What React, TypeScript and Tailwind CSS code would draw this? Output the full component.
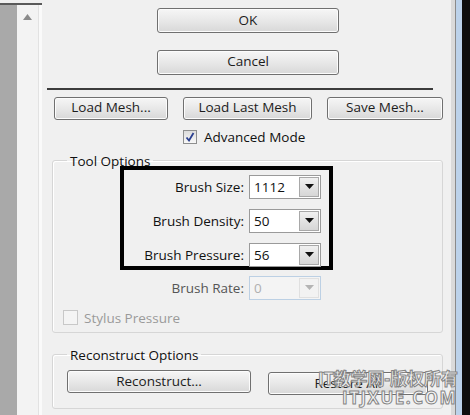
const font = "font-['Open_Sans','Noto_Sans','Noto_Sans_CJK_SC',sans-serif]";

function Button({ label, w, h = 23 }: { label: string; w: string; h?: number }) {
  return (
    <button
      type="button"
      className={`${w} ${h === 25 ? "h-[25px]" : "h-[23px]"} shrink-0 rounded-[3px] border border-[#707070] bg-gradient-to-b from-[#f6f6f6] via-[#e8e8e8] to-[#d8d8d8] text-[13.5px] leading-none text-[#1c1c1c] shadow-[inset_0_0_0_1px_#fcfcfc]`}
    >
      {label}
    </button>
  );
}

function Combo({ value, disabled }: { value: string; disabled?: boolean }) {
  return (
    <div
      className={`flex h-[24px] w-[72px] items-stretch border ${
        disabled ? "border-[#bcd0e4] bg-[#f4f4f4]" : "border-[#9a9a9a] bg-white"
      }`}
    >
      <div
        className={`flex flex-1 items-center pl-[4px] text-[13.5px] ${
          disabled ? "text-[#b0b0b0]" : "text-[#111]"
        }`}
      >
        {value}
      </div>
      <div
        className={`m-[1px] flex w-[20px] items-center justify-center border ${
          disabled
            ? "border-[#e0e0e0] bg-[#f2f2f2]"
            : "border-[#a8a8a8] bg-gradient-to-b from-[#f0f0f0] to-[#d6d6d6]"
        }`}
      >
        <svg width="9" height="5" viewBox="0 0 9 5">
          <path d="M0 0h9L4.5 5z" fill={disabled ? "#b4b4b4" : "#111"} />
        </svg>
      </div>
    </div>
  );
}

function Row({ label, value, disabled }: { label: string; value: string; disabled?: boolean }) {
  return (
    <div className="flex items-center">
      <span
        className={`w-[125px] pr-[5px] text-right text-[13.5px] ${
          disabled ? "text-[#555]" : "text-[#111]"
        }`}
      >
        {label}
      </span>
      <Combo value={value} disabled={disabled} />
    </div>
  );
}

export default function App() {
  return (
    <div className={`${font} flex h-[415px] w-[470px] overflow-hidden bg-[#f0f0f0]`}>
      {/* left window edge + scrollbar */}
      <div className="flex w-[42px] shrink-0 flex-col">
        <div className="mt-[3px] h-[2px] bg-[#5a5a5a]" />
        <div className="flex flex-1">
          <div className="w-[17px] bg-[#a9a9a9]" />
          <div className="flex w-[22px] justify-center border-r border-[#e2e2e2] bg-[#f3f3f3] pt-[9px]">
            <svg width="9" height="6" viewBox="0 0 9 6">
              <path d="M4.5 0L9 6H0z" fill="#8a8a8a" />
            </svg>
          </div>
          <div className="w-[3px] bg-[#fafafa]" />
        </div>
      </div>

      {/* main panel */}
      <div className="flex w-[409px] shrink-0 flex-col">
        <div className="ml-[115px] mt-[7px]">
          <Button label="OK" w="w-[182px]" h={25} />
        </div>
        <div className="ml-[115px] mt-[15px]">
          <Button label="Cancel" w="w-[182px]" h={25} />
        </div>
        <div className="ml-[5px] mt-[13px] h-[2px] w-[386px] bg-[#3c3c3c]" />

        <div className="ml-[12px] mt-[7px] flex gap-[15px]">
          <Button label="Load Mesh..." w="w-[114px]" />
          <Button label="Load Last Mesh" w="w-[129px]" />
          <Button label="Save Mesh..." w="w-[116px]" />
        </div>

        <label className="ml-[141px] mt-[7px] flex items-center gap-[7px] text-[13.5px] text-[#111]">
          <span className="flex h-[14px] w-[14px] items-center justify-center border border-[#8e8f8f] bg-gradient-to-b from-[#dcdcdc] to-[#f8f8f8]">
            <svg width="10" height="10" viewBox="0 0 10 10">
              <path d="M1.5 5.5L4 8.5L8.5 1" fill="none" stroke="#2a3f8f" strokeWidth="1.8" />
            </svg>
          </span>
          Advanced Mode
        </label>

        <fieldset className="ml-[10px] mt-[6px] h-[180px] w-[391px] rounded-[3px] border border-[#d6d6d6] px-0 pb-0 shadow-[inset_1px_1px_0_#fff]">
          <legend className="ml-[14px] px-[3px] text-[13.5px] leading-[16px] text-[#111]">
            Tool Options
          </legend>
          <div className="ml-[67px] mt-[-3px] flex h-[104px] w-[213px] flex-col gap-[10px] border-[4px] border-black pt-[5px]">
            <Row label="Brush Size:" value="1112" />
            <Row label="Brush Density:" value="50" />
            <Row label="Brush Pressure:" value="56" />
          </div>
          <div className="ml-[71px] mt-[6px]">
            <Row label="Brush Rate:" value="0" disabled />
          </div>
          <label className="ml-[10px] mt-[8px] flex items-center gap-[6px] text-[13.5px] text-[#9a9a9a]">
            <span className="h-[15px] w-[15px] border border-[#c8c8c8] bg-[#f4f4f4]" />
            Stylus Pressure
          </label>
        </fieldset>

        <fieldset className="ml-[10px] mt-[14px] h-[62px] w-[391px] rounded-[3px] border border-[#d6d6d6] px-0 pb-0 shadow-[inset_1px_1px_0_#fff]">
          <legend className="ml-[14px] px-[3px] text-[13.5px] leading-[16px] text-[#111]">
            Reconstruct Options
          </legend>
          <div className="ml-[14px] mt-[7px] flex gap-[17px]">
            <Button label="Reconstruct..." w="w-[184px]" />
            <div className="relative">
              <Button label="Restore All" w="w-[160px]" />
              <span className="pointer-events-none absolute left-[50px] top-[-1px] whitespace-nowrap text-[17px] font-bold leading-[20px] text-[#f6f6f6] [-webkit-text-stroke:1px_#858585]">
                IT教学网-版权所有
              </span>
              <span className="pointer-events-none absolute left-[74px] top-[18px] whitespace-nowrap text-[17px] font-bold leading-[20px] tracking-[1.5px] text-[#f6f6f6] [-webkit-text-stroke:1px_#858585]">
                ITJXUE.COM
              </span>
            </div>
          </div>
        </fieldset>
      </div>

      {/* right window edge */}
      <div className="flex flex-1">
        <div className="w-[4px] bg-[#dadada]" />
        <div className="w-[1px] bg-[#8a8a8a]" />
        <div className="w-[6px] bg-[#bcd2ea]" />
        <div className="flex-1 bg-[#0e0e0e]" />
      </div>
    </div>
  );
}
